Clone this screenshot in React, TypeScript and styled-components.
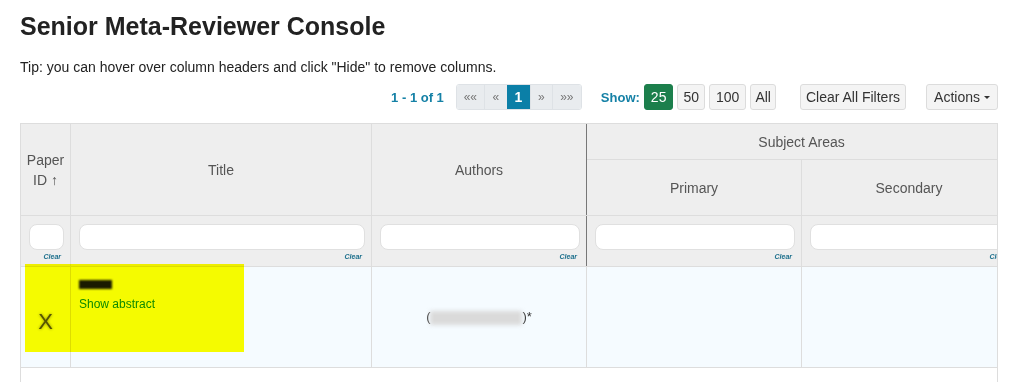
import React from 'react';
import styled, { createGlobalStyle } from 'styled-components';

const GlobalStyle = createGlobalStyle`
  body {
    margin: 0;
    background: #fff;
    font-family: "Liberation Sans", Arial, sans-serif;
    color: #333;
  }
`;

const Page = styled.div`
  padding: 0 14px 0 20px;
`;

const Title = styled.h1`
  margin: 12px 0 0;
  font-size: 25px;
  line-height: 28px;
  font-weight: 700;
  color: #222;
`;

const Tip = styled.p`
  margin: 17px 0 0;
  font-size: 14px;
  line-height: 20px;
  color: #222;
`;

const Toolbar = styled.div`
  display: flex;
  justify-content: flex-end;
  align-items: center;
  margin-top: 7px;
  height: 26px;
`;

const Teal = styled.span<{ $gap?: number }>`
  color: #1581a6;
  font-weight: 700;
  font-size: 13px;
  margin-right: ${(p) => p.$gap ?? 0}px;
`;

const Pager = styled.div`
  display: flex;
  height: 24px;
  border: 1px solid #dee2e6;
  border-radius: 3px;
  overflow: hidden;
  margin-right: 19px;
`;

const PageBtn = styled.span<{ $w: number; $active?: boolean }>`
  display: flex;
  align-items: center;
  justify-content: center;
  width: ${(p) => p.$w}px;
  font-size: ${(p) => (p.$active ? 14 : 12)}px;
  font-weight: ${(p) => (p.$active ? 700 : 400)};
  color: ${(p) => (p.$active ? '#fff' : '#777')};
  background: ${(p) => (p.$active ? '#0b7fa7' : '#e9ecef')};
  border-left: ${(p) => (p.$active ? 'none' : '1px solid #dee2e6')};
  &:first-child {
    border-left: none;
  }
`;

const Btn = styled.span<{ $active?: boolean; $gap?: number; $pad?: number }>`
  display: inline-flex;
  align-items: center;
  height: 26px;
  box-sizing: border-box;
  padding: 0 ${(p) => p.$pad ?? 6}px;
  font-size: 14px;
  border-radius: 3px;
  border: 1px solid ${(p) => (p.$active ? '#1c7f4c' : '#dcdcdc')};
  background: ${(p) => (p.$active ? '#1c7f4c' : '#f4f4f4')};
  color: ${(p) => (p.$active ? '#fff' : '#333')};
  margin-right: ${(p) => p.$gap ?? 4}px;
`;

const Caret = styled.span`
  display: inline-block;
  margin-left: 4px;
  border-left: 3px solid transparent;
  border-right: 3px solid transparent;
  border-top: 3px solid #333;
`;

const TableWrap = styled.div`
  position: relative;
  margin-top: 13px;
  width: 978px;
  height: 270px;
  box-sizing: border-box;
  border: 1px solid #dddddd;
  border-bottom: none;
  overflow: hidden;
`;

const Table = styled.table`
  border-collapse: collapse;
  table-layout: fixed;
  width: 996px;
  margin: -1px 0 0 -1px;
`;

const Th = styled.th<{ $h?: number; $dark?: boolean }>`
  background: #eeeeee;
  border: 1px solid #dddddd;
  border-right: 1px solid ${(p) => (p.$dark ? '#777' : '#dddddd')};
  height: ${(p) => p.$h ?? 36}px;
  padding: 0 4px;
  font-weight: 400;
  font-size: 14px;
  line-height: 20px;
  color: #555;
  text-align: center;
  vertical-align: middle;
`;

const FilterCell = styled.td<{ $dark?: boolean }>`
  background: #eeeeee;
  border: 1px solid #dddddd;
  border-right: 1px solid ${(p) => (p.$dark ? '#777' : '#dddddd')};
  height: 42px;
  padding: 8px 6px 0 8px;
  vertical-align: top;
  white-space: nowrap;
`;

const FilterInput = styled.div`
  height: 26px;
  box-sizing: border-box;
  background: #fff;
  border: 1px solid #e0e0e0;
  border-radius: 8px;
`;

const ClearLink = styled.div`
  text-align: right;
  padding-right: 3px;
  margin-top: 2px;
  height: 10px;
  line-height: 10px;
  font-size: 7px;
  font-style: italic;
  font-weight: 700;
  color: #1c6f8c;
`;

const DataCell = styled.td<{ $align?: string }>`
  background: #f5fbff;
  border: 1px solid #dddddd;
  height: 100px;
  padding: 0 8px;
  text-align: ${(p) => p.$align ?? 'left'};
  vertical-align: middle;
  font-size: 13px;
`;

const TitleCell = styled(DataCell)`
  height: 91px;
  vertical-align: top;
  padding-top: 9px;
`;

const Redacted = styled.span<{ $w: number; $h: number; $c: string; $blur?: number }>`
  display: inline-block;
  width: ${(p) => p.$w}px;
  height: ${(p) => p.$h}px;
  background: ${(p) => p.$c};
  filter: blur(${(p) => p.$blur ?? 1}px);
  vertical-align: middle;
`;

const AbstractLink = styled.div`
  margin-top: 6px;
  font-size: 12px;
  color: #0e8a12;
`;

const IdMark = styled.span`
  display: inline-block;
  margin-top: 10px;
  font-size: 22px;
  font-weight: 300;
  color: #555;
  text-shadow: 0 0 3px #888;
`;

const Highlight = styled.div`
  position: absolute;
  left: 4px;
  top: 140px;
  width: 219px;
  height: 88px;
  background: #ffff00;
  mix-blend-mode: multiply;
`;

const App: React.FC = () => {
  return (
    <Page>
      <GlobalStyle />
      <Title>Senior Meta-Reviewer Console</Title>
      <Tip>Tip: you can hover over column headers and click "Hide" to remove columns.</Tip>

      <Toolbar>
        <Teal $gap={12}>1 - 1 of 1</Teal>
        <Pager>
          <PageBtn $w={27}>««</PageBtn>
          <PageBtn $w={22}>«</PageBtn>
          <PageBtn $w={23} $active>1</PageBtn>
          <PageBtn $w={21}>»</PageBtn>
          <PageBtn $w={28}>»»</PageBtn>
        </Pager>
        <Teal $gap={4}>Show:</Teal>
        <Btn $active>25</Btn>
        <Btn $pad={5}>50</Btn>
        <Btn>100</Btn>
        <Btn $gap={24} $pad={4}>
          All
        </Btn>
        <Btn $gap={20} $pad={5}>
          Clear All Filters
        </Btn>
        <Btn $gap={0} $pad={7}>
          Actions
          <Caret />
        </Btn>
      </Toolbar>

      <TableWrap>
        <Table>
          <colgroup>
            <col style={{ width: 50 }} />
            <col style={{ width: 301 }} />
            <col style={{ width: 215 }} />
            <col style={{ width: 215 }} />
            <col style={{ width: 215 }} />
          </colgroup>
          <thead>
            <tr>
              <Th rowSpan={2}>Paper ID&nbsp;↑</Th>
              <Th rowSpan={2}>Title</Th>
              <Th rowSpan={2} $dark>
                Authors
              </Th>
              <Th colSpan={2} $h={35}>
                Subject Areas
              </Th>
            </tr>
            <tr>
              <Th $h={55}>Primary</Th>
              <Th $h={55}>Secondary</Th>
            </tr>
            <tr>
              {[false, false, true, false, false].map((dark, i) => (
                <FilterCell key={i} $dark={dark}>
                  <FilterInput />
                  <ClearLink>Clear</ClearLink>
                </FilterCell>
              ))}
            </tr>
          </thead>
          <tbody>
            <tr>
              <DataCell $align="center">
                <IdMark>X</IdMark>
              </DataCell>
              <TitleCell>
                <Redacted $w={33} $h={9} $c="#1a1a1a" />
                <AbstractLink>Show abstract</AbstractLink>
              </TitleCell>
              <DataCell $align="center">
                (<Redacted $w={92} $h={14} $c="#dadada" $blur={2} />)*
              </DataCell>
              <DataCell />
              <DataCell />
            </tr>
          </tbody>
        </Table>
        <Highlight />
      </TableWrap>
    </Page>
  );
};

export default App;
